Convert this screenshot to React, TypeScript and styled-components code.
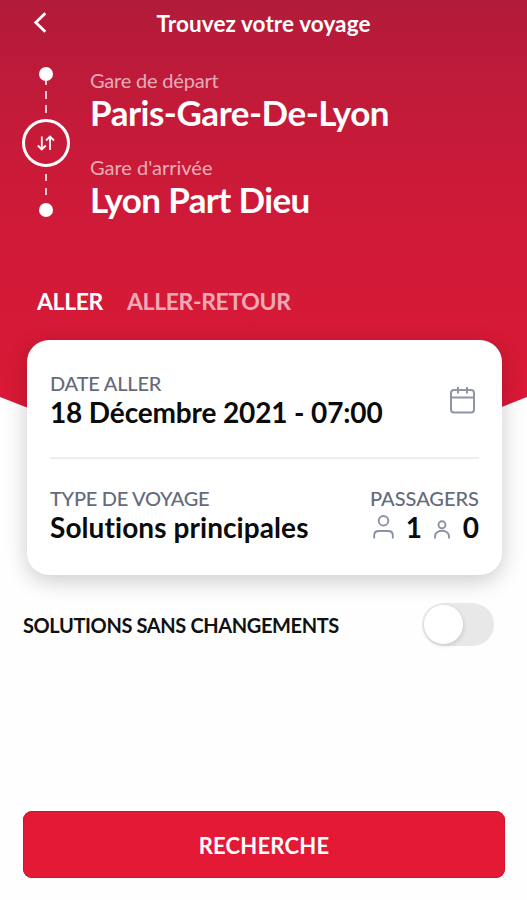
import React, { useState } from "react";
import styled, { createGlobalStyle } from "styled-components";

const GlobalStyle = createGlobalStyle`
  * { box-sizing: border-box; }
  body { margin: 0; background: #fff; }
  button { padding: 0; border: 0; background: none; font: inherit; color: inherit; cursor: pointer; }
`;

const Screen = styled.main`
  display: flex;
  flex-direction: column;
  width: 527px;
  height: 900px;
  overflow: hidden;
  background: #fefefe;
  font-family: "Lato", "Liberation Sans", sans-serif;
  font-variant-ligatures: none;
  white-space: nowrap;
`;

const Hero = styled.section`
  flex: none;
  height: 500px;
  color: #fff;
  background: linear-gradient(180deg, #b21b3a 0, #c41a39 110px, #cf1a38 220px, #da1935 400px, #da1935 500px);
  clip-path: polygon(0 0, 100% 0, 100% 397px, 50% 100%, 0 397px);
`;

const TopBar = styled.header`
  display: grid;
  grid-template-columns: 80px 1fr 80px;
  align-items: center;
  height: 46px;
`;

const BackButton = styled.button`
  display: flex;
  padding-left: 33px;
  margin-top: -2px;
`;

const Title = styled.h1`
  margin: 0;
  padding-top: 2px;
  font-size: 22.5px;
  font-weight: 700;
  line-height: 44px;
  letter-spacing: 0.1px;
  text-align: center;
`;

const Route = styled.div`
  display: flex;
  gap: 21px;
  padding: 21px 22px 0;
`;

const Rail = styled.div`
  display: flex;
  flex-direction: column;
  align-items: center;
  width: 47px;
  margin-right: 1px;
`;

const Dot = styled.span`
  width: 14px;
  height: 14px;
  border-radius: 50%;
  background: #fff;
`;

const SwapButton = styled.button`
  display: flex;
  align-items: center;
  justify-content: center;
  width: 48px;
  height: 48px;
  border: 3px solid #fff;
  border-radius: 50%;
`;

const Stations = styled.div`
  display: flex;
  flex-direction: column;
  gap: 23px;
  padding-top: 1px;
  margin-left: -1px;
`;

const StationLabel = styled.div<{ $spacing?: string }>`
  font-size: 20px;
  line-height: 24px;
  letter-spacing: ${(p) => p.$spacing ?? "0"};
  color: rgba(255, 255, 255, 0.65);
`;

const StationName = styled.div<{ $spacing?: string }>`
  font-size: 35px;
  font-weight: 700;
  line-height: 40px;
  letter-spacing: ${(p) => p.$spacing ?? "0"};
`;

const Tabs = styled.nav`
  display: flex;
  gap: 24px;
  padding: 68px 37px 0;
`;

const Tab = styled.button<{ $active?: boolean }>`
  font-size: 23px;
  font-weight: 700;
  line-height: 28px;
  letter-spacing: -0.38px;
  color: ${(p) => (p.$active ? "#fff" : "rgba(255, 255, 255, 0.65)")};
`;

const Card = styled.section`
  position: relative;
  flex: none;
  width: 475px;
  height: 235px;
  margin: -160px 0 0 27px;
  padding: 31px 23px 0;
  border-radius: 22px;
  background: #fff;
  box-shadow: 0 6px 22px rgba(0, 0, 0, 0.2);
`;

const CardRow = styled.div`
  display: flex;
  justify-content: space-between;
  align-items: flex-start;
`;

const Divider = styled.hr`
  height: 2px;
  margin: 28px 0 27px;
  border: 0;
  background: #eceeef;
`;

const FieldLabel = styled.div<{ $spacing?: string }>`
  font-size: 20px;
  font-weight: 500;
  line-height: 24px;
  letter-spacing: ${(p) => p.$spacing ?? "0"};
  color: #646b7b;
`;

const FieldValue = styled.div<{ $spacing?: string }>`
  font-size: 28px;
  font-weight: 700;
  line-height: 34px;
  letter-spacing: ${(p) => p.$spacing ?? "0"};
  color: #0b0b0c;
`;

const CalendarButton = styled.button`
  display: flex;
  margin: 16px 4px 0 0;
`;

const Passengers = styled.div`
  display: flex;
  align-items: flex-start;
  justify-content: space-between;
  padding-left: 3px;
`;

const Option = styled.div`
  display: flex;
  justify-content: space-between;
  align-items: center;
  height: 43px;
  margin: 28px 33px 0 23px;
`;

const OptionLabel = styled.span`
  font-size: 20px;
  font-weight: 700;
  line-height: 24px;
  letter-spacing: -0.38px;
  color: #111;
`;

const Toggle = styled.button<{ $on: boolean }>`
  display: flex;
  justify-content: ${(p) => (p.$on ? "flex-end" : "flex-start")};
  align-items: center;
  width: 72px;
  height: 43px;
  padding: 0 2px;
  border-radius: 22px;
  background: ${(p) => (p.$on ? "#e31936" : "#e8e8e8")};
`;

const Knob = styled.span`
  width: 39px;
  height: 39px;
  border-radius: 50%;
  background: #fff;
  box-shadow: 1px 2px 4px rgba(0, 0, 0, 0.12);
`;

const SearchButton = styled.button`
  height: 67px;
  margin: auto 22px 22px 23px;
  padding-top: 2px;
  border-radius: 9px;
  background: #e31936;
  box-shadow: inset 0 0 0 1px #d8102a;
  color: #fff;
  font-size: 22px;
  font-weight: 700;
  letter-spacing: 0.2px;
`;

const Dashes = ({ height, marks }: { height: number; marks: number[][] }) => (
  <svg width="2" height={height}>
    {marks.map(([from, to]) => (
      <line key={from} x1="1" x2="1" y1={from} y2={to} stroke="#fff" strokeOpacity="0.85" strokeWidth="1.800" />
    ))}
  </svg>
);

const Person = ({ small }: { small?: boolean }) =>
  small ? (
    <svg width="17" height="34" viewBox="0 0 17 34" fill="none" stroke="#8c92a5" strokeWidth="1.900">
      <circle cx="8" cy="14.800" r="3.500" />
      <path d="M1 28.500v-2q0-3 2.500-4.500 4.500-2.500 9 0 2.500 1.500 2.500 4.500v2" />
    </svg>
  ) : (
    <svg width="21" height="34" viewBox="0 0 21 34" fill="none" stroke="#8c92a5" strokeWidth="1.900">
      <circle cx="10.500" cy="10.800" r="4.800" />
      <path d="M1.200 28.500v-3q0-4.500 4.500-4.500h9.600q4.500 0 4.500 4.500v3" />
    </svg>
  );

export default function App() {
  const [direct, setDirect] = useState(false);
  const [roundTrip, setRoundTrip] = useState(false);

  return (
    <>
      <GlobalStyle />
      <Screen>
        <Hero>
          <TopBar>
            <BackButton aria-label="Retour">
              <svg width="14" height="21" viewBox="0 0 14 21" fill="none" stroke="#fff" strokeWidth="2.800">
                <path d="M12.300 1.300 2.800 10.500l9.500 9.200" />
              </svg>
            </BackButton>
            <Title>Trouvez votre voyage</Title>
          </TopBar>
          <Route>
            <Rail>
              <Dot />
              <Dashes height={38} marks={[[0, 4], [10, 18], [24, 32]]} />
              <SwapButton aria-label="Inverser">
                <svg width="20" height="16" viewBox="0 0 20 16" fill="none" stroke="#fff" strokeWidth="1.800">
                  <path d="M5.800 1.500v12.500M1.800 10.500l4 4 4-4M14 15V1.800M10 5.500l4-4 4 4" />
                </svg>
              </SwapButton>
              <Dashes height={36} marks={[[7, 14], [21, 28]]} />
              <Dot />
            </Rail>
            <Stations>
              <div>
                <StationLabel $spacing="-0.2px">Gare de départ</StationLabel>
                <StationName $spacing="-0.47px">Paris-Gare-De-Lyon</StationName>
              </div>
              <div>
                <StationLabel>Gare d'arrivée</StationLabel>
                <StationName $spacing="-0.62px">Lyon Part Dieu</StationName>
              </div>
            </Stations>
          </Route>
          <Tabs>
            <Tab $active={!roundTrip} onClick={() => setRoundTrip(false)}>ALLER</Tab>
            <Tab $active={roundTrip} onClick={() => setRoundTrip(true)}>ALLER-RETOUR</Tab>
          </Tabs>
        </Hero>
        <Card>
          <CardRow>
            <div>
              <FieldLabel $spacing="-0.2px">DATE ALLER</FieldLabel>
              <FieldValue $spacing="-0.14px">18 Décembre 2021 - 07:00</FieldValue>
            </div>
            <CalendarButton aria-label="Choisir une date">
              <svg width="25" height="27" viewBox="0 0 25 27" fill="none" stroke="#8f95a7" strokeWidth="2">
                <rect x="1" y="3" width="23" height="22.500" rx="3" />
                <path d="M1 10.500h23M8 0v6.500M17 0v6.500" />
              </svg>
            </CalendarButton>
          </CardRow>
          <Divider />
          <CardRow>
            <div>
              <FieldLabel $spacing="-0.28px">TYPE DE VOYAGE</FieldLabel>
              <FieldValue $spacing="0.08px">Solutions principales</FieldValue>
            </div>
            <div>
              <FieldLabel>PASSAGERS</FieldLabel>
              <Passengers>
                <Person />
                <FieldValue>1</FieldValue>
                <Person small />
                <FieldValue>0</FieldValue>
              </Passengers>
            </div>
          </CardRow>
        </Card>
        <Option>
          <OptionLabel>SOLUTIONS SANS CHANGEMENTS</OptionLabel>
          <Toggle $on={direct} role="switch" aria-checked={direct} onClick={() => setDirect(!direct)}>
            <Knob />
          </Toggle>
        </Option>
        <SearchButton>RECHERCHE</SearchButton>
      </Screen>
    </>
  );
}
